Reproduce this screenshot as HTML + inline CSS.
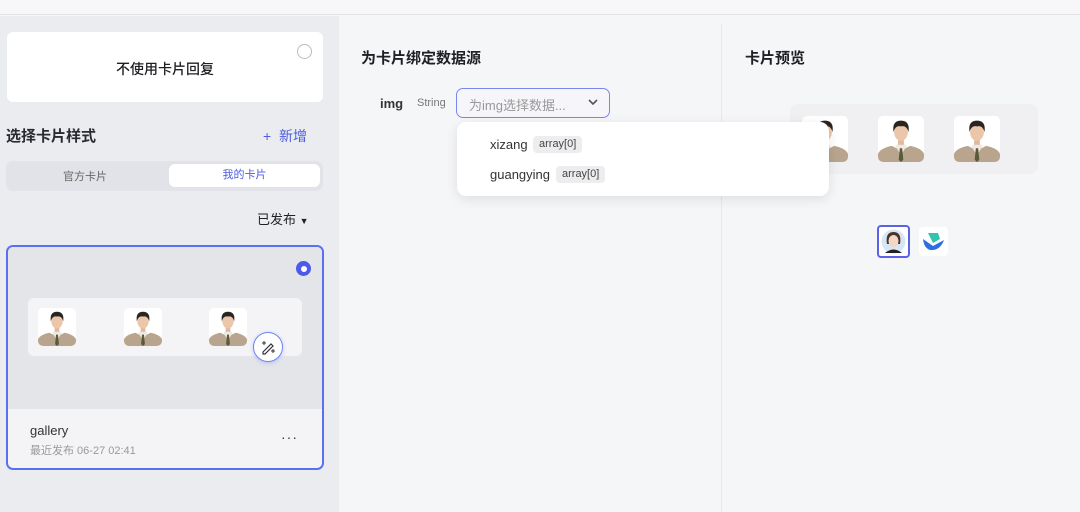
<!DOCTYPE html>
<html><head><meta charset="utf-8"><style>
*{margin:0;padding:0;box-sizing:border-box}
body{width:1080px;height:512px;overflow:hidden;background:#f5f6f8;font-family:"Liberation Sans","Noto Sans CJK SC",sans-serif;position:relative;color:#1f1f24}
.a{position:absolute}
.ph{position:absolute;border-radius:5px;overflow:hidden;background:#fff}
.ph svg{width:100%;height:100%;display:block}
</style></head><body>
<svg width="0" height="0" style="position:absolute"><defs>
<symbol id="p" viewBox="0 0 40 40">
<rect width="40" height="40" fill="#fff"/>
<path d="M0 40 L0 33 Q2 28 12 26 L20 30 L28 26 Q38 28 40 33 L40 40Z" fill="#b9a58d"/>
<path d="M15 26 L20 34 L25 26 L22 24 L18 24Z" fill="#eee9e2"/>
<path d="M19 28 L21 28 L22 38 L20 40 L18 38Z" fill="#5a5a3a"/>
<rect x="17.5" y="19" width="5" height="6" fill="#e2b89b"/>
<ellipse cx="20" cy="14" rx="6" ry="7.5" fill="#ecc6aa"/>
<path d="M13.5 14 Q12 4 20 4 Q28 4 26.5 14 Q25 8 20 9 Q15 8 13.5 14Z" fill="#2b2522"/>
</symbol></defs></svg>

<div class="a" style="left:0;top:0;width:1080px;height:15px;background:#f7f7f9;border-bottom:1px solid #e3e4e8"></div>

<div class="a" style="left:0;top:16px;width:339px;height:496px;background:#ebecf0"></div>
<div class="a" style="left:7px;top:32px;width:316px;height:70px;background:#fff;border-radius:6px"></div>
<div class="a" style="left:7px;top:59px;width:316px;text-align:center;font-size:14px;font-weight:500">不使用卡片回复</div>
<div class="a" style="left:297px;top:44px;width:15px;height:15px;border:1px solid #bbb;border-radius:50%;background:#fff"></div>
<div class="a" style="left:6px;top:125px;font-size:15px;font-weight:600;color:#2a2a30">选择卡片样式</div>
<div class="a" style="left:263px;top:126px;font-size:14px;color:#4d5ce0">+&nbsp; 新增</div>
<div class="a" style="left:6px;top:161px;width:317px;height:30px;background:#e2e3e8;border-radius:7px"></div>
<div class="a" style="left:6px;top:168px;width:158px;text-align:center;font-size:11px;color:#666">官方卡片</div>
<div class="a" style="left:169px;top:164px;width:151px;height:23px;background:#fff;border-radius:6px;text-align:center;font-size:11px;line-height:23px;color:#4d5ce0">我的卡片</div>
<div class="a" style="left:257px;top:209px;font-size:13px;color:#222">已发布 <span style="font-size:9px">▼</span></div>

<div class="a" style="left:6px;top:245px;width:318px;height:225px;border:2px solid #5b70f0;border-radius:7px;background:#f4f4f6;overflow:hidden">
  <div class="a" style="left:0;top:0;width:316px;height:162px;background:#e4e5e9"></div>
  <div class="a" style="left:288px;top:14px;width:15px;height:15px;border-radius:50%;background:#4f5ae8"><div class="a" style="left:4.5px;top:4.5px;width:6px;height:6px;border-radius:50%;background:#fff"></div></div>
  <div class="a" style="left:20px;top:51px;width:274px;height:58px;background:#f4f4f6;border-radius:6px"></div>
  <div class="ph" style="left:30px;top:61px;width:38px;height:38px"><svg><use href="#p"/></svg></div>
  <div class="ph" style="left:116px;top:61px;width:38px;height:38px"><svg><use href="#p"/></svg></div>
  <div class="ph" style="left:201px;top:61px;width:38px;height:38px"><svg><use href="#p"/></svg></div>
  <div class="a" style="left:245px;top:85px;width:30px;height:30px;border-radius:50%;background:#fff;border:1px solid #6d86f5;box-shadow:0 1px 4px rgba(80,100,240,.3)">
    <svg width="28" height="28" viewBox="0 0 28 28"><path d="M9 19 L17 11 L19 13 L11 21 L9 21Z" fill="none" stroke="#333" stroke-width="1.2"/><path d="M10 8 v4 M8 10 h4 M19 16 v4 M17 18 h4" stroke="#333" stroke-width="1"/></svg>
  </div>
  <div class="a" style="left:22px;top:176px;font-size:13px;font-weight:500;color:#333">gallery</div>
  <div class="a" style="left:22px;top:195px;font-size:11px;color:#999">最近发布 06-27 02:41</div>
  <div class="a" style="left:273px;top:182px;font-size:14px;color:#333;letter-spacing:1px">···</div>
</div>

<div class="a" style="left:721px;top:24px;width:1px;height:488px;background:#e6e7ea"></div>
<div class="a" style="left:361px;top:47px;font-size:15px;font-weight:600">为卡片绑定数据源</div>
<div class="a" style="left:380px;top:96px;font-size:13px;font-weight:600;color:#333">img</div>
<div class="a" style="left:417px;top:97px;font-size:11px;color:#777">String</div>
<div class="a" style="left:456px;top:88px;width:154px;height:30px;border:1.5px solid #7a86f0;border-radius:7px;background:#f6f6fa"></div>
<div class="a" style="left:469px;top:95px;font-size:13px;color:#999">为img选择数据...</div>
<svg class="a" style="left:587px;top:97px" width="12" height="10" viewBox="0 0 12 10"><path d="M2 3 L6 7 L10 3" fill="none" stroke="#555" stroke-width="1.6"/></svg>

<div class="a" style="left:745px;top:47px;font-size:15px;font-weight:600">卡片预览</div>
<div class="a" style="left:790px;top:104px;width:248px;height:70px;background:#f0f0f2;border-radius:8px"></div>
<div class="ph" style="left:802px;top:116px;width:46px;height:46px"><svg><use href="#p"/></svg></div>
<div class="ph" style="left:878px;top:116px;width:46px;height:46px"><svg><use href="#p"/></svg></div>
<div class="ph" style="left:954px;top:116px;width:46px;height:46px"><svg><use href="#p"/></svg></div>

<div class="a" style="left:457px;top:122px;width:372px;height:74px;background:#fff;border-radius:9px;box-shadow:0 3px 12px rgba(0,0,0,.1)"></div>
<div class="a" style="left:490px;top:137px;font-size:13px;color:#333">xizang</div>
<div class="a" style="left:533px;top:136px;padding:2px 6px;font-size:11px;line-height:13px;background:#ededf0;border-radius:4px;color:#444">array[0]</div>
<div class="a" style="left:490px;top:167px;font-size:13px;color:#333">guangying</div>
<div class="a" style="left:556px;top:166px;padding:2px 6px;font-size:11px;line-height:13px;background:#ededf0;border-radius:4px;color:#444">array[0]</div>

<div class="a" style="left:877px;top:225px;width:33px;height:33px;border:2px solid #5a62e8;border-radius:4px;background:#fff">
<svg width="29" height="29" viewBox="0 0 29 29"><circle cx="14.5" cy="14.5" r="12" fill="#d7e6f5"/><path d="M6 26 Q14.5 19 23 26Z" fill="#222"/><path d="M8 17 Q6 5 14.5 5 Q23 5 21 17Z" fill="#4a3428"/><ellipse cx="14.5" cy="14" rx="5" ry="6" fill="#f3d6c6"/></svg></div>
<div class="a" style="left:919px;top:227px;width:29px;height:29px;background:#fff;border-radius:4px">
<svg width="29" height="29" viewBox="0 0 29 29"><path d="M9 6 L19 6 L21 12 L14 16Z" fill="#2ec4b0"/><path d="M4 12 L14 19 L25 13 Q21 24 11 23 Q5 21 4 12Z" fill="#2d6fe0"/></svg></div>
</body></html>
